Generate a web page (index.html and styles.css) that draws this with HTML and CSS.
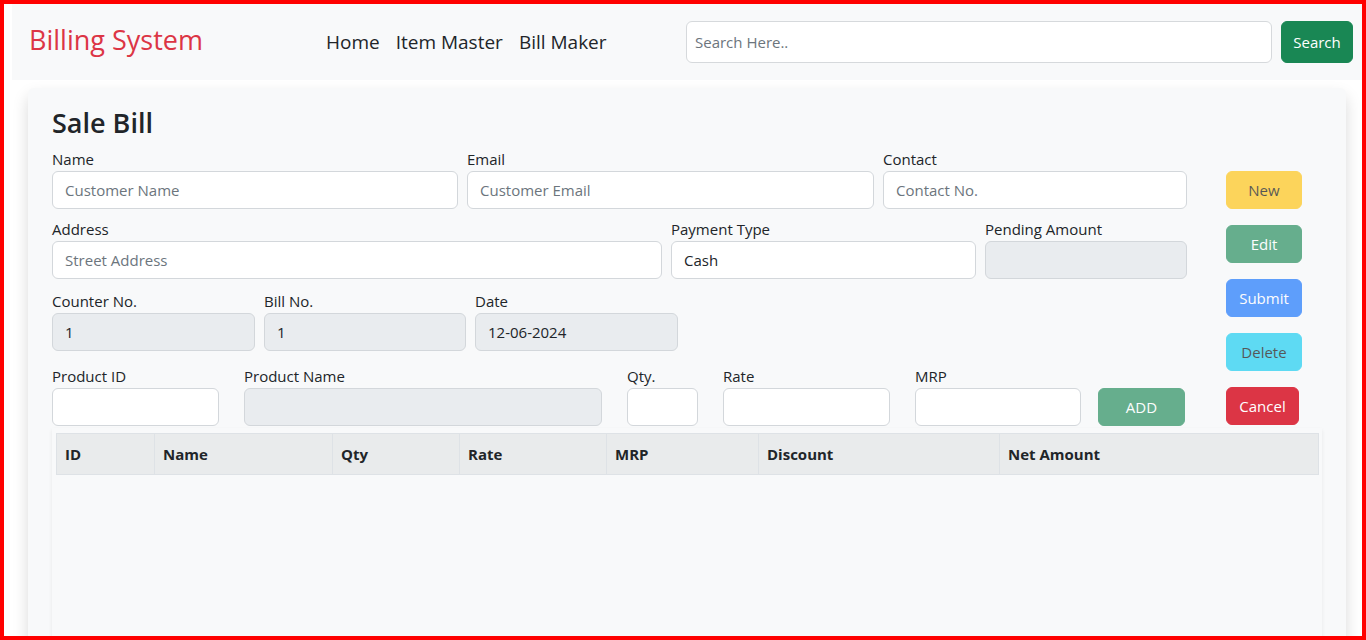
FILE: index.html
```html
<!DOCTYPE html>
<html lang="en">
<head>
<meta charset="utf-8">
<title>Billing System</title>
<link rel="stylesheet" href="styles.css">
</head>
<body>
<div class="frame">
  <div class="page">
    <nav class="navbar">
      <a class="brand" href="#">Billing System</a>
      <ul class="nav">
        <li><a href="#">Home</a></li>
        <li><a href="#">Item Master</a></li>
        <li><a href="#">Bill Maker</a></li>
      </ul>
      <form class="search">
        <input class="search-input" type="text" placeholder="Search Here..">
        <button class="btn btn-success search-btn" type="button">Search</button>
      </form>
    </nav>

    <main class="card">
      <h3 class="title">Sale Bill</h3>
      <div class="top">
        <div class="form">
          <div class="row row1">
            <div class="field"><label>Name</label><input class="ctl" placeholder="Customer Name"></div>
            <div class="field"><label>Email</label><input class="ctl" placeholder="Customer Email"></div>
            <div class="field"><label>Contact</label><input class="ctl" placeholder="Contact No."></div>
          </div>
          <div class="row row2">
            <div class="field"><label>Address</label><input class="ctl" placeholder="Street Address"></div>
            <div class="field"><label>Payment Type</label><input class="ctl" value="Cash"></div>
            <div class="field"><label>Pending Amount</label><input class="ctl" disabled></div>
          </div>
          <div class="row row3">
            <div class="field"><label>Counter No.</label><input class="ctl" value="1" disabled></div>
            <div class="field"><label>Bill No.</label><input class="ctl" value="1" disabled></div>
            <div class="field"><label>Date</label><input class="ctl" value="12-06-2024" disabled></div>
          </div>
          <div class="row row4">
            <div class="field"><label>Product ID</label><input class="ctl"></div>
            <div class="field"><label>Product Name</label><input class="ctl" disabled></div>
            <div class="field"><label>Qty.</label><input class="ctl"></div>
            <div class="field"><label>Rate</label><input class="ctl"></div>
            <div class="field"><label>MRP</label><input class="ctl"></div>
            <div class="field add-cell"><button class="btn btn-success off add-btn" type="button">ADD</button></div>
          </div>
        </div>
        <div class="actions">
          <button class="btn btn-warning off" type="button">New</button>
          <button class="btn btn-success off" type="button">Edit</button>
          <button class="btn btn-primary off" type="button">Submit</button>
          <button class="btn btn-info off" type="button">Delete</button>
          <button class="btn btn-danger cancel" type="button">Cancel</button>
        </div>
      </div>

      <div class="table-wrap">
        <table class="items">
          <thead>
            <tr>
              <th class="c-id">ID</th>
              <th class="c-name">Name</th>
              <th class="c-qty">Qty</th>
              <th class="c-rate">Rate</th>
              <th class="c-mrp">MRP</th>
              <th class="c-disc">Discount</th>
              <th class="c-net">Net Amount</th>
            </tr>
          </thead>
          <tbody></tbody>
        </table>
      </div>
    </main>
  </div>
</div>
</body>
</html>
```

FILE: styles.css
```css
* { box-sizing: border-box; }

html, body {
  margin: 0;
  padding: 0;
  background: #ffffff;
}

body {
  font-family: "Open Sans", "Noto Sans", "Liberation Sans", sans-serif;
  font-size: 15px;
  color: #212529;
}

.frame {
  width: 1366px;
  height: 640px;
  border: 4px solid #ff0000;
  overflow: hidden;
  background: #ffffff;
}

.page {
  padding-left: 8px;
}

/* Navbar */
.navbar {
  height: 76px;
  background: #f8f9fa;
  display: flex;
  align-items: center;
  padding: 0 9px 0 17px;
}

.brand {
  width: 297px;
  font-size: 27px;
  font-weight: 500;
  color: #dc3545;
  text-decoration: none;
  margin-top: -5px;
}

.nav {
  list-style: none;
  display: flex;
  gap: 16px;
  margin: 0;
  padding: 0;
}

.nav a {
  font-size: 19px;
  color: #212529;
  text-decoration: none;
}

.search {
  margin-left: auto;
  display: flex;
  gap: 9px;
  margin-top: -1px;
}

.search-input {
  width: 586px;
  height: 42px;
  border: 1px solid #d6d9dc;
  border-radius: 6px;
  background: #ffffff;
  padding: 0 8px;
  font-family: inherit;
  font-size: 15px;
  color: #212529;
}

.search-input::placeholder { color: #6c757d; }

.search-btn {
  width: 72px;
  height: 42px;
  font-size: 16px;
}

/* Buttons */
.btn {
  display: block;
  border: 1px solid transparent;
  border-radius: 6px;
  font-family: inherit;
  font-size: 15px;
  line-height: 24px;
  padding: 0;
  cursor: pointer;
  text-align: center;
}

.btn-success { background: #198754; border-color: #198754; color: #ffffff; }
.btn-warning { background: #ffc107; border-color: #ffc107; color: #000000; }
.btn-primary { background: #0d6efd; border-color: #0d6efd; color: #ffffff; }
.btn-info { background: #0dcaf0; border-color: #0dcaf0; color: #000000; }
.btn-danger { background: #dc3545; border-color: #dc3545; color: #ffffff; }
.off { opacity: 0.65; }

/* Card */
.card {
  margin: 8px 16px 0 16px;
  height: 560px;
  background: #f8f9fa;
  border-radius: 6px;
  box-shadow: 0 8px 16px rgba(0, 0, 0, 0.15);
  padding: 18px 24px 0 24px;
}

.title {
  margin: 0 0 7px 0;
  font-size: 27px;
  font-weight: 600;
  line-height: 34px;
  color: #212529;
}

.top {
  display: flex;
  gap: 39px;
}

.form {
  width: 1135px;
}

.row {
  display: grid;
  column-gap: 9px;
}

.row1 { grid-template-columns: 406px 407px 304px; }
.row2 { grid-template-columns: 610px 305px 202px; margin-top: 8px; }
.row3 { grid-template-columns: 203px 202px 203px; margin-top: 10px; }
.row4 { grid-template-columns: 167px 358px 71px 167px 166px 87px; column-gap: 25px; margin-top: 13px; }
.row4 .add-cell { margin-left: -8px; }

.field label {
  display: block;
  line-height: 24px;
  height: 24px;
}

.ctl {
  display: block;
  width: 100%;
  height: 38px;
  border: 1px solid #d3d7db;
  border-radius: 6px;
  background: #ffffff;
  padding: 0 12px;
  font-family: inherit;
  font-size: 15px;
  color: #212529;
}

.ctl::placeholder { color: #6c757d; }

.ctl:disabled {
  background: #e9ecef;
  color: #212529;
  opacity: 1;
}

.add-cell { padding-top: 24px; }

.add-btn {
  width: 87px;
  height: 38px;
}

.actions {
  width: 76px;
  padding-top: 24px;
  display: flex;
  flex-direction: column;
  gap: 16px;
}

.actions .btn {
  width: 76px;
  height: 38px;
}

.actions .cancel { width: 73px; }

/* Table */
.table-wrap {
  margin-top: 2px;
  height: 220px;
  background: #f8f9fa;
  box-shadow: 0 2px 4px rgba(0, 0, 0, 0.075);
  padding: 5px 4px 0 4px;
}

.items {
  width: 1262px;
  border-collapse: collapse;
  table-layout: fixed;
}

.items th {
  background: #e9ebec;
  border: 1px solid #dee2e6;
  text-align: left;
  font-size: 15px;
  font-weight: 700;
  line-height: 24px;
  padding: 8px 8px;
  color: #212529;
}

.c-id { width: 98px; }
.c-name { width: 178px; }
.c-qty { width: 127px; }
.c-rate { width: 147px; }
.c-mrp { width: 152px; }
.c-disc { width: 241px; }
.c-net { width: 319px; }
```
